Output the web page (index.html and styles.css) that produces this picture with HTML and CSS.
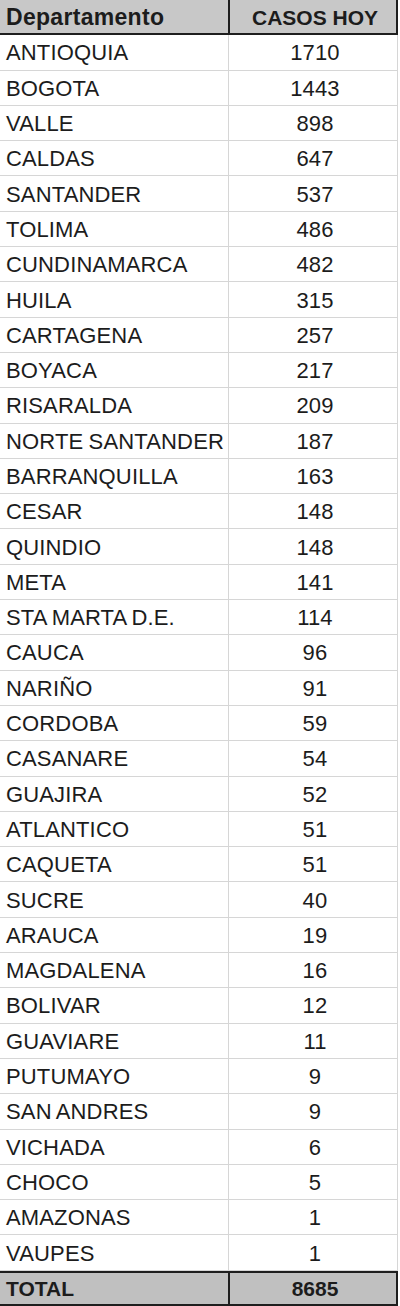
FILE: index.html
```html
<!DOCTYPE html>
<html lang="es">
<head>
<meta charset="utf-8">
<title>Casos hoy por departamento</title>
<link rel="stylesheet" href="styles.css">
</head>
<body>
<div class="sheet">
  <div class="row head"><div class="c1">Departamento</div><div class="c2">CASOS HOY</div></div>
  <div class="row"><div class="c1">ANTIOQUIA</div><div class="c2">1710</div></div>
  <div class="row"><div class="c1">BOGOTA</div><div class="c2">1443</div></div>
  <div class="row"><div class="c1">VALLE</div><div class="c2">898</div></div>
  <div class="row"><div class="c1">CALDAS</div><div class="c2">647</div></div>
  <div class="row"><div class="c1">SANTANDER</div><div class="c2">537</div></div>
  <div class="row"><div class="c1">TOLIMA</div><div class="c2">486</div></div>
  <div class="row"><div class="c1">CUNDINAMARCA</div><div class="c2">482</div></div>
  <div class="row"><div class="c1">HUILA</div><div class="c2">315</div></div>
  <div class="row"><div class="c1">CARTAGENA</div><div class="c2">257</div></div>
  <div class="row"><div class="c1">BOYACA</div><div class="c2">217</div></div>
  <div class="row"><div class="c1">RISARALDA</div><div class="c2">209</div></div>
  <div class="row"><div class="c1">NORTE SANTANDER</div><div class="c2">187</div></div>
  <div class="row"><div class="c1">BARRANQUILLA</div><div class="c2">163</div></div>
  <div class="row"><div class="c1">CESAR</div><div class="c2">148</div></div>
  <div class="row"><div class="c1">QUINDIO</div><div class="c2">148</div></div>
  <div class="row"><div class="c1">META</div><div class="c2">141</div></div>
  <div class="row"><div class="c1">STA MARTA D.E.</div><div class="c2">114</div></div>
  <div class="row"><div class="c1">CAUCA</div><div class="c2">96</div></div>
  <div class="row"><div class="c1">NARIÑO</div><div class="c2">91</div></div>
  <div class="row"><div class="c1">CORDOBA</div><div class="c2">59</div></div>
  <div class="row"><div class="c1">CASANARE</div><div class="c2">54</div></div>
  <div class="row"><div class="c1">GUAJIRA</div><div class="c2">52</div></div>
  <div class="row"><div class="c1">ATLANTICO</div><div class="c2">51</div></div>
  <div class="row"><div class="c1">CAQUETA</div><div class="c2">51</div></div>
  <div class="row"><div class="c1">SUCRE</div><div class="c2">40</div></div>
  <div class="row"><div class="c1">ARAUCA</div><div class="c2">19</div></div>
  <div class="row"><div class="c1">MAGDALENA</div><div class="c2">16</div></div>
  <div class="row"><div class="c1">BOLIVAR</div><div class="c2">12</div></div>
  <div class="row"><div class="c1">GUAVIARE</div><div class="c2">11</div></div>
  <div class="row"><div class="c1">PUTUMAYO</div><div class="c2">9</div></div>
  <div class="row"><div class="c1">SAN ANDRES</div><div class="c2">9</div></div>
  <div class="row"><div class="c1">VICHADA</div><div class="c2">6</div></div>
  <div class="row"><div class="c1">CHOCO</div><div class="c2">5</div></div>
  <div class="row"><div class="c1">AMAZONAS</div><div class="c2">1</div></div>
  <div class="row"><div class="c1">VAUPES</div><div class="c2">1</div></div>
  <div class="row total"><div class="c1">TOTAL</div><div class="c2">8685</div></div>
</div>
</body>
</html>
```

FILE: styles.css
```css
html, body {
  margin: 0;
  padding: 0;
  background: #ffffff;
}

.sheet {
  width: 398px;
  font-family: "Liberation Sans", Arial, sans-serif;
  font-size: 22px;
  letter-spacing: 0.15px;
  word-spacing: -1px;
  color: #1c1c1c;
}

.row {
  display: grid;
  grid-template-columns: 228px 1fr;
  height: 35.3px;
  box-sizing: border-box;
  border-bottom: 1px solid #d6d6d6;
  border-right: 1px solid #d6d6d6;
}

.c1, .c2 {
  display: flex;
  align-items: center;
  padding-top: 2px;
  box-sizing: border-box;
  white-space: nowrap;
}

.c1 {
  padding-left: 6px;
}

.c2 {
  justify-content: center;
  padding-left: 4px;
  border-left: 1px solid #d6d6d6;
}

.head, .total {
  background: #c8c8c8;
  font-weight: bold;
  font-size: 21px;
  letter-spacing: 0;
  word-spacing: 0;
  border-right: 2px solid #1e1e1e;
}

.head .c1 {
  font-size: 23px;
  letter-spacing: 0.3px;
}

.head {
  border-bottom: 2px solid #1e1e1e;
}

.head .c2, .total .c2 {
  border-left: 2px solid #1e1e1e;
}

.total {
  border-top: 2px solid #1e1e1e;
  border-bottom: 2px solid #1e1e1e;
  background: #c0c0c0;
}
```
